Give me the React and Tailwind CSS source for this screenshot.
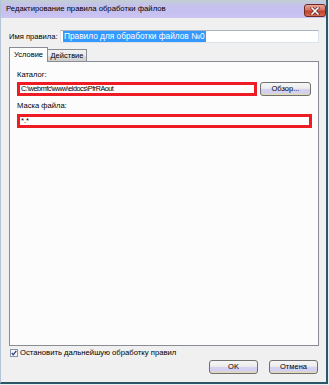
import React from "react";

function VistaButton({ children, className = "" }) {
  return (
    <div
      className={`flex items-center justify-center rounded-[3px] border border-[#707070] bg-[linear-gradient(to_bottom,#f6f6f6_0%,#ececec_45%,#d6d3f0_52%,#d2cff0_82%,#e6dea6_100%)] text-[7.5px] text-black ${className}`}
    >
      {children}
    </div>
  );
}

export default function App() {
  return (
    <div className="w-[329px] h-[385px] bg-[#e8eef2] font-['Liberation_Sans',Arial,sans-serif] text-black overflow-hidden">
      <div className="w-[328px] h-[384px] flex flex-col bg-[#f0f0f0] border-l border-l-[#b4c4d6] border-r-2 border-r-[#2b5767] border-b-2 border-b-[#2b5767]">
        {/* Title bar */}
        <div className="h-[18px] flex items-start bg-[linear-gradient(to_bottom,#c3cfd2_0%,#c4c2ec_30%,#c6c0f2_70%,#cac6f2_100%)]">
          <div className="pl-[5px] pt-[3px] text-[7.7px] leading-[12px] text-black">
            Редактирование правила обработки файлов
          </div>
          <div className="ml-auto mr-[0px] mt-[4px] w-[22px] h-[13px] rounded-[3px] border border-[#6d2a22] bg-[linear-gradient(to_bottom,#e8a597_0%,#d9705e_45%,#c2412c_55%,#d76a4e_100%)] flex items-center justify-center">
            <svg width="10" height="8" viewBox="0 0 10 8">
              <path d="M2 1 L8 7 M8 1 L2 7" stroke="#5a2a2a" strokeWidth="3" strokeLinecap="square" />
              <path d="M2 1 L8 7 M8 1 L2 7" stroke="#ffffff" strokeWidth="1.6" strokeLinecap="square" />
            </svg>
          </div>
        </div>

        {/* Body */}
        <div className="flex-1 flex flex-col pl-[8px] pr-[7px]">
          {/* Name row */}
          <div className="mt-[12px] flex items-center h-[13px]">
            <div className="w-[51px] text-[7.6px] leading-[10px]">Имя правила:</div>
            <div className="w-[259px] h-[13px] bg-white border border-[#dbe2ea] border-t-[#aab4c4] flex items-center pl-[2px]">
              <span className="bg-[#3399ff] text-white text-[8.3px] leading-[11px] px-[1px]">
                Правило для обработки файлов №0
              </span>
            </div>
          </div>

          {/* Tabs */}
          <div className="mt-[4px] flex items-end h-[15px] relative z-10">
            <div className="w-[39px] h-[15px] bg-[#fcfcfc] border border-b-0 border-[#898c95] flex items-center justify-center text-[7.5px] leading-[10px] pb-[1px]">
              Условие
            </div>
            <div className="w-[40px] h-[13px] -ml-[1px] border border-[#898c95] bg-[linear-gradient(to_bottom,#f2f2f2_0%,#ebebeb_50%,#dddddd_51%,#cfcfcf_100%)] flex items-center justify-center text-[7.5px] leading-[10px]">
              Действие
            </div>
          </div>

          {/* Panel */}
          <div className="-mt-[1px] w-[310px] h-[285px] bg-[#fcfcfc] border border-[#898c95] pl-[7px] pt-[8px] flex flex-col">
            <div className="text-[7.6px] leading-[10px] h-[10px]">Каталог:</div>
            <div className="mt-[2px] flex items-center">
              <div className="w-[240px] h-[14px] border-[3px] border-[#ee1c25] bg-white flex items-center pl-[1px] text-[7.2px] leading-[8px] tracking-[-0.45px] whitespace-nowrap">
                C:\webmfc\www\eldocs\PfrRAout
              </div>
              <VistaButton className="ml-[3px] w-[51px] h-[14px]">Обзор...</VistaButton>
            </div>
            <div className="mt-[5px] text-[7.6px] leading-[10px] h-[10px]">Маска файла:</div>
            <div className="mt-[3px] w-[295px] h-[14px] border-[3px] border-[#ee1c25] bg-white flex items-center pl-[1px] text-[7.5px] leading-[8px]">
              *.*
            </div>
          </div>

          {/* Checkbox */}
          <div className="mt-[3px] flex items-center h-[8px] pl-[1px]">
            <svg width="8" height="8" viewBox="0 0 8 8">
              <rect x="0.5" y="0.5" width="7" height="7" fill="#f4f6fa" stroke="#8a96a8" />
              <path d="M1.8 4 L3.3 5.8 L6.3 1.8" stroke="#2a3f7a" strokeWidth="1.3" fill="none" />
            </svg>
            <div className="ml-[2px] text-[7.7px] leading-[10px]">Остановить дальнейшую обработку правил</div>
          </div>

          {/* Buttons */}
          <div className="mt-[3px] flex justify-end gap-[11px] pr-[1px]">
            <VistaButton className="w-[49px] h-[14px]">OK</VistaButton>
            <VistaButton className="w-[49px] h-[14px]">Отмена</VistaButton>
          </div>
        </div>
      </div>
    </div>
  );
}
